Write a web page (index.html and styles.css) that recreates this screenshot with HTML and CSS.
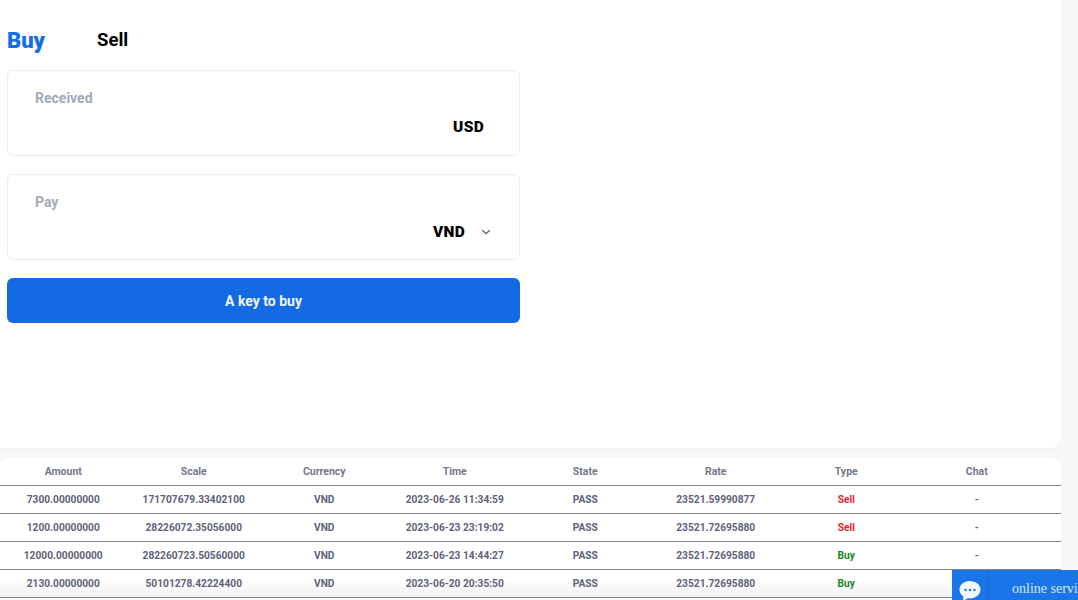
FILE: index.html
```html
<!DOCTYPE html>
<html lang="en">
<head>
<meta charset="utf-8">
<title>Buy</title>
<link rel="stylesheet" href="styles.css">
</head>
<body>
<main class="page">
  <section class="trade-card">
    <div class="tabs">
      <span class="tab tab-active">Buy</span>
      <span class="tab">Sell</span>
    </div>
    <div class="field">
      <div class="field-label">Received</div>
      <div class="field-value"><span class="unit">USD</span></div>
    </div>
    <div class="field">
      <div class="field-label">Pay</div>
      <div class="field-value field-select">
        <span class="unit">VND</span>
        <svg class="chevron" width="10" height="6" viewBox="0 0 10 6" aria-hidden="true"><path d="M1.2 1.2 5 4.6 8.8 1.2" fill="none" stroke="#555" stroke-width="1.2"/></svg>
      </div>
    </div>
    <button class="buy-btn" type="button">A key to buy</button>
  </section>
  <section class="orders">
    <div class="row head"><span>Amount</span><span>Scale</span><span>Currency</span><span>Time</span><span>State</span><span>Rate</span><span>Type</span><span>Chat</span></div>
    <div class="row"><span>7300.00000000</span><span>171707679.33402100</span><span>VND</span><span>2023-06-26 11:34:59</span><span>PASS</span><span>23521.59990877</span><span class="sell">Sell</span><span>-</span></div>
    <div class="row"><span>1200.00000000</span><span>28226072.35056000</span><span>VND</span><span>2023-06-23 23:19:02</span><span>PASS</span><span>23521.72695880</span><span class="sell">Sell</span><span>-</span></div>
    <div class="row"><span>12000.00000000</span><span>282260723.50560000</span><span>VND</span><span>2023-06-23 14:44:27</span><span>PASS</span><span>23521.72695880</span><span class="buy">Buy</span><span>-</span></div>
    <div class="row row-last"><span>2130.00000000</span><span>50101278.42224400</span><span>VND</span><span>2023-06-20 20:35:50</span><span>PASS</span><span>23521.72695880</span><span class="buy">Buy</span><span></span></div>
  </section>
</main>
<aside class="chat-widget">
  <div class="chat-icon">
    <svg width="24" height="22" viewBox="0 0 24 22" aria-hidden="true"><path d="M12 1C5.900 1 1.500 4.600 1.500 9.600c0 3 1.600 5.500 4 7.100L5 21l5-2.700c.7.100 1.300.100 2 .100 6.100 0 10.500-3.800 10.500-8.800S18.100 1 12 1Z" fill="#f4f8fe"/><circle cx="7.500" cy="10" r="1.200" fill="#1a75e8"/><circle cx="12" cy="10" r="1.200" fill="#1a75e8"/><circle cx="16.500" cy="10" r="1.200" fill="#1a75e8"/></svg>
  </div>
  <div class="chat-text">online service</div>
</aside>
</body>
</html>
```
FILE: styles.css
```css
* { box-sizing: border-box; }
html, body { margin: 0; height: 600px; overflow: hidden; }
body {
  background: #f8f8f8;
  font-family: Roboto, "Liberation Sans", sans-serif;
  color: #000;
}
.page { width: 1061px; }
.trade-card {
  height: 448px;
  padding: 26px 0 0 7px;
  background: #fff;
  border-radius: 0 0 10px 0;
  box-shadow: 0 1px 6px rgba(0, 0, 0, .03);
}
.tabs {
  display: flex;
  align-items: center;
  height: 28px;
  margin-bottom: 16px;
}
.tab { width: 90px; font-size: 18.500px; font-weight: 700; }
.tab-active { font-size: 22px; font-weight: 900; color: #146ee3; }
.field {
  width: 513px;
  height: 86px;
  margin-bottom: 18px;
  padding: 19px 35px 0 27px;
  border: 1px solid #ececee;
  border-radius: 6px;
}
.field-label { font-size: 14px; line-height: 16px; font-weight: 700; color: #a2a9b8; }
.field-value {
  display: flex;
  justify-content: flex-end;
  align-items: center;
  margin-top: 13px;
  height: 16px;
}
.field-select { margin-top: 14px; margin-right: -7px; gap: 16px; }
.unit { font-size: 15.500px; font-weight: 900; letter-spacing: .3px; }
.chevron { display: block; margin-top: -1px; }
.buy-btn {
  display: block;
  width: 513px;
  height: 45px;
  border: 0;
  border-radius: 6px;
  background: #136ae3;
  color: #f2f7fe;
  font-family: inherit;
  font-size: 14px;
  font-weight: 700;
}
.orders {
  width: 1063px;
  margin: 10px 0 0 -2px;
  background: #fff;
  border-radius: 10px 10px 0 0;
}
.row {
  display: grid;
  grid-template-columns: repeat(8, 1fr);
  align-items: center;
  height: 28px;
  padding-right: 19px;
  border-bottom: 1.500px solid #85878f;
  font-size: 10.200px;
  font-weight: 700;
  color: #5f6278;
  text-align: center;
  white-space: nowrap;
}
.head { height: 27.500px; font-size: 10.500px; font-weight: 700; color: #74778c; }
.row-last { background: linear-gradient(#fff 30%, #f1f1f2); }
.sell { color: #ee1c2e; }
.buy { color: #17851f; }
.chat-widget {
  position: fixed;
  left: 952px;
  top: 570px;
  display: flex;
  width: 140px;
  height: 30px;
  background: #1a75e8;
  overflow: hidden;
}
.chat-icon {
  flex: none;
  width: 36px;
  border-right: 1px solid #1a69cf;
  padding: 10px 0 0 6px;
}
.chat-text {
  padding: 10px 0 0 24px;
  font-family: "Liberation Serif", serif;
  font-size: 14px;
  line-height: 17px;
  color: #d5e5fa;
  white-space: nowrap;
}
```
